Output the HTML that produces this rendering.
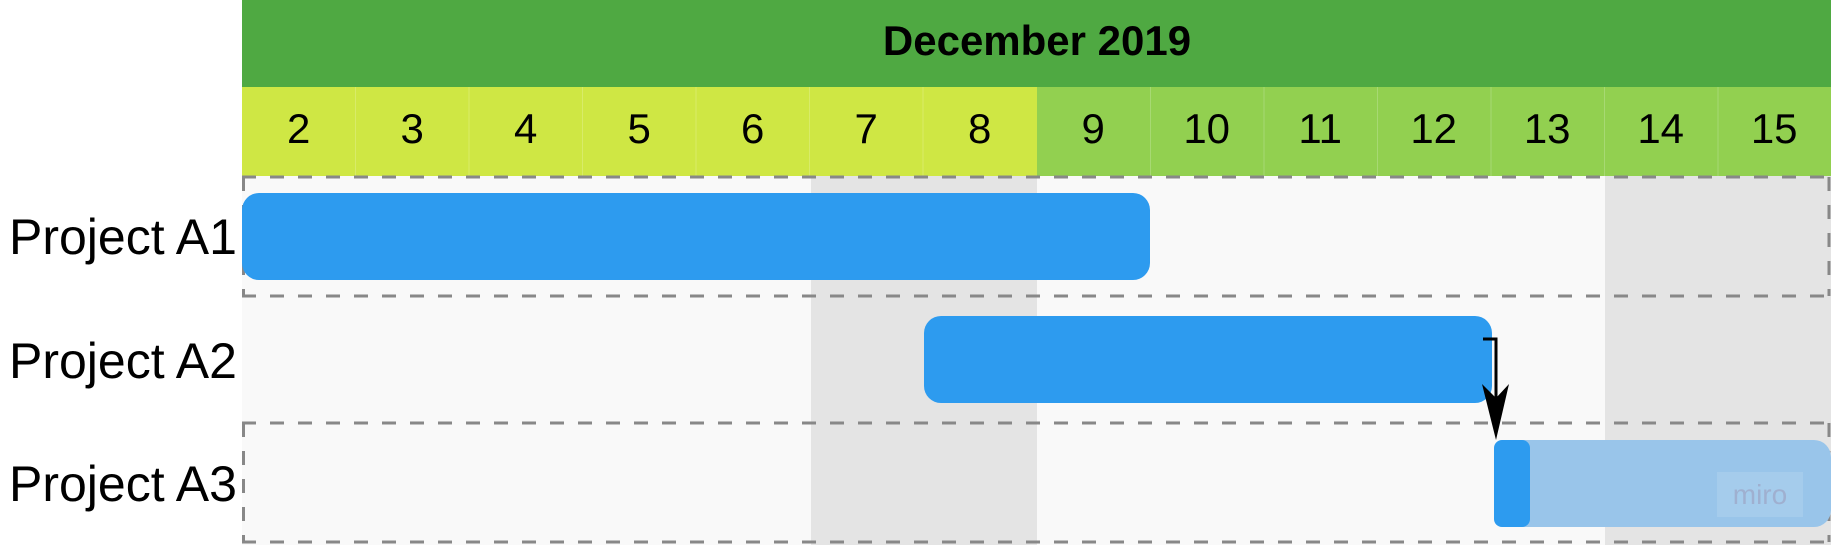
<!DOCTYPE html>
<html><head><meta charset="utf-8"><style>
html,body{margin:0;padding:0;background:#fff;width:1831px;height:545px;overflow:hidden}
svg{display:block}
text{font-family:"Liberation Sans",Arial,sans-serif}
</style></head><body>
<svg width="1831" height="545" viewBox="0 0 1831 545" xmlns="http://www.w3.org/2000/svg">
<rect x="0" y="0" width="1831" height="545" fill="#fff"/>
<rect x="242" y="0" width="1589" height="87" fill="#4fa942"/>
<text x="1037" y="55" font-size="42" font-weight="bold" text-anchor="middle" fill="#000">December 2019</text>
<rect x="242" y="87" width="795" height="89" fill="#cfe744"/>
<rect x="1037" y="87" width="794" height="89" fill="#92d050"/>
<g stroke="#ffffff" stroke-opacity="0.2" stroke-width="1">
<line x1="355.5" y1="87" x2="355.5" y2="176"/><line x1="469" y1="87" x2="469" y2="176"/><line x1="582.5" y1="87" x2="582.5" y2="176"/><line x1="696" y1="87" x2="696" y2="176"/><line x1="809.5" y1="87" x2="809.5" y2="176"/><line x1="923" y1="87" x2="923" y2="176"/><line x1="1150.5" y1="87" x2="1150.5" y2="176"/><line x1="1264" y1="87" x2="1264" y2="176"/><line x1="1377.5" y1="87" x2="1377.5" y2="176"/><line x1="1491" y1="87" x2="1491" y2="176"/><line x1="1604.5" y1="87" x2="1604.5" y2="176"/><line x1="1718" y1="87" x2="1718" y2="176"/>
</g>
<g font-size="42" text-anchor="middle" fill="#000">
<text x="298.7" y="143">2</text><text x="412.2" y="143">3</text><text x="525.7" y="143">4</text><text x="639.2" y="143">5</text><text x="752.7" y="143">6</text><text x="866.2" y="143">7</text><text x="979.7" y="143">8</text><text x="1093.2" y="143">9</text><text x="1206.7" y="143">10</text><text x="1320.2" y="143">11</text><text x="1433.7" y="143">12</text><text x="1547.2" y="143">13</text><text x="1660.7" y="143">14</text><text x="1774.2" y="143">15</text>
</g>
<rect x="242" y="176" width="1589" height="369" fill="#f9f9f9"/>
<rect x="811" y="176" width="226" height="369" fill="#e4e4e4"/>
<rect x="1605" y="176" width="226" height="369" fill="#e4e4e4"/>
<g stroke="#888" stroke-width="3" stroke-dasharray="14,14" fill="none">
<line x1="242" y1="177" x2="1831" y2="177"/>
<line x1="242" y1="296" x2="1831" y2="296"/>
<line x1="242" y1="423" x2="1831" y2="423"/>
<line x1="242" y1="542" x2="1831" y2="542"/>
<line x1="243.5" y1="177" x2="243.5" y2="296"/>
<line x1="1829" y1="177" x2="1829" y2="296"/>
<line x1="243.5" y1="423" x2="243.5" y2="542"/>
<line x1="1829" y1="423" x2="1829" y2="542"/>
</g>
<g font-size="50" fill="#000">
<text x="9" y="254">Project A1</text>
<text x="9" y="378">Project A2</text>
<text x="9" y="501">Project A3</text>
</g>
<rect x="242" y="193" width="908" height="87" rx="17" fill="#2d9bef"/>
<rect x="924" y="316" width="568" height="87" rx="17" fill="#2d9bef"/>
<rect x="1494" y="440" width="337" height="87" rx="17" fill="#99c5ea"/>
<rect x="1494" y="440" width="36" height="87" rx="8" fill="#2d9bef"/>
<polyline points="1483,339 1496,339 1496,400" fill="none" stroke="#000" stroke-width="3"/>
<polygon points="1482,384 1496,398 1509,384 1496,440" fill="#000"/>
<rect x="1717" y="472" width="86" height="45" fill="#ffffff" fill-opacity="0.12"/>
<text x="1760" y="504" font-size="28" text-anchor="middle" fill="#9fb0d0">miro</text>
</svg>
</body></html>
